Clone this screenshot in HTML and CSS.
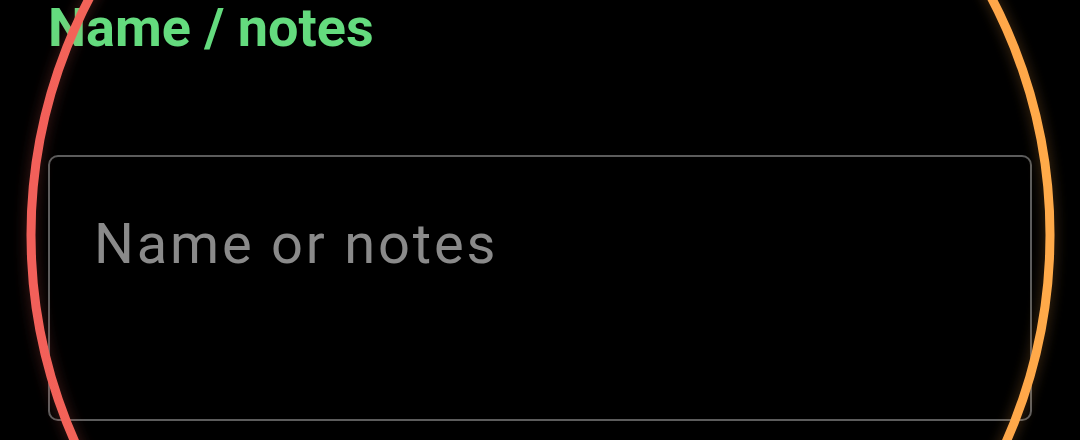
FILE: index.html
```html
<!DOCTYPE html>
<html lang="en">
<head>
<meta charset="utf-8">
<title>Name / notes</title>
<link rel="stylesheet" href="styles.css">
</head>
<body>
<main class="screen">
  <h1 class="title">Name / notes</h1>
  <textarea class="notes" placeholder="Name or notes"></textarea>
  <svg class="ring" width="1080" height="440" viewBox="0 0 1080 440" aria-hidden="true">
    <defs>
      <linearGradient id="ringGrad" x1="0" y1="0" x2="1" y2="0">
        <stop offset="0" stop-color="#f2605a"/>
        <stop offset="0.35" stop-color="#f87a52"/>
        <stop offset="0.7" stop-color="#fd984b"/>
        <stop offset="1" stop-color="#ffaa4a"/>
      </linearGradient>
      <filter id="glow" x="-10%" y="-10%" width="120%" height="120%">
        <feGaussianBlur in="SourceGraphic" stdDeviation="7" result="b"/>
        <feComponentTransfer in="b" result="d">
          <feFuncA type="linear" slope="0.3"/>
        </feComponentTransfer>
        <feMerge>
          <feMergeNode in="d"/>
          <feMergeNode in="SourceGraphic"/>
        </feMerge>
      </filter>
    </defs>
    <circle cx="540.5" cy="235" r="509.5" fill="none" stroke="url(#ringGrad)" stroke-width="9" filter="url(#glow)"/>
  </svg>
</main>
</body>
</html>
```
FILE: styles.css
```css
html, body {
  margin: 0;
  padding: 0;
  background: #000;
}
.screen {
  position: relative;
  width: 1080px;
  height: 440px;
  overflow: hidden;
  box-sizing: border-box;
  padding: 0 48px;
  display: flex;
  flex-direction: column;
  font-family: Roboto, "Liberation Sans", sans-serif;
}
.title {
  margin: 0;
  padding-top: 1px;
  font-size: 54px;
  line-height: 53px;
  font-weight: 700;
  color: #64db7e;
}
.notes {
  margin-top: 101px;
  width: 984px;
  height: 266px;
  box-sizing: border-box;
  border: 2px solid #5c5c5c;
  border-radius: 10px;
  background: #000;
  padding: 59px 44px 0;
  font-family: Roboto, "Liberation Sans", sans-serif;
  font-size: 56px;
  line-height: 56px;
  letter-spacing: 2.8px;
  color: #e0e0e0;
  resize: none;
  outline: none;
  overflow: hidden;
}
.notes::placeholder {
  color: #8a8a8a;
  opacity: 1;
}
.ring {
  position: absolute;
  left: 0;
  top: 0;
  pointer-events: none;
}
```
